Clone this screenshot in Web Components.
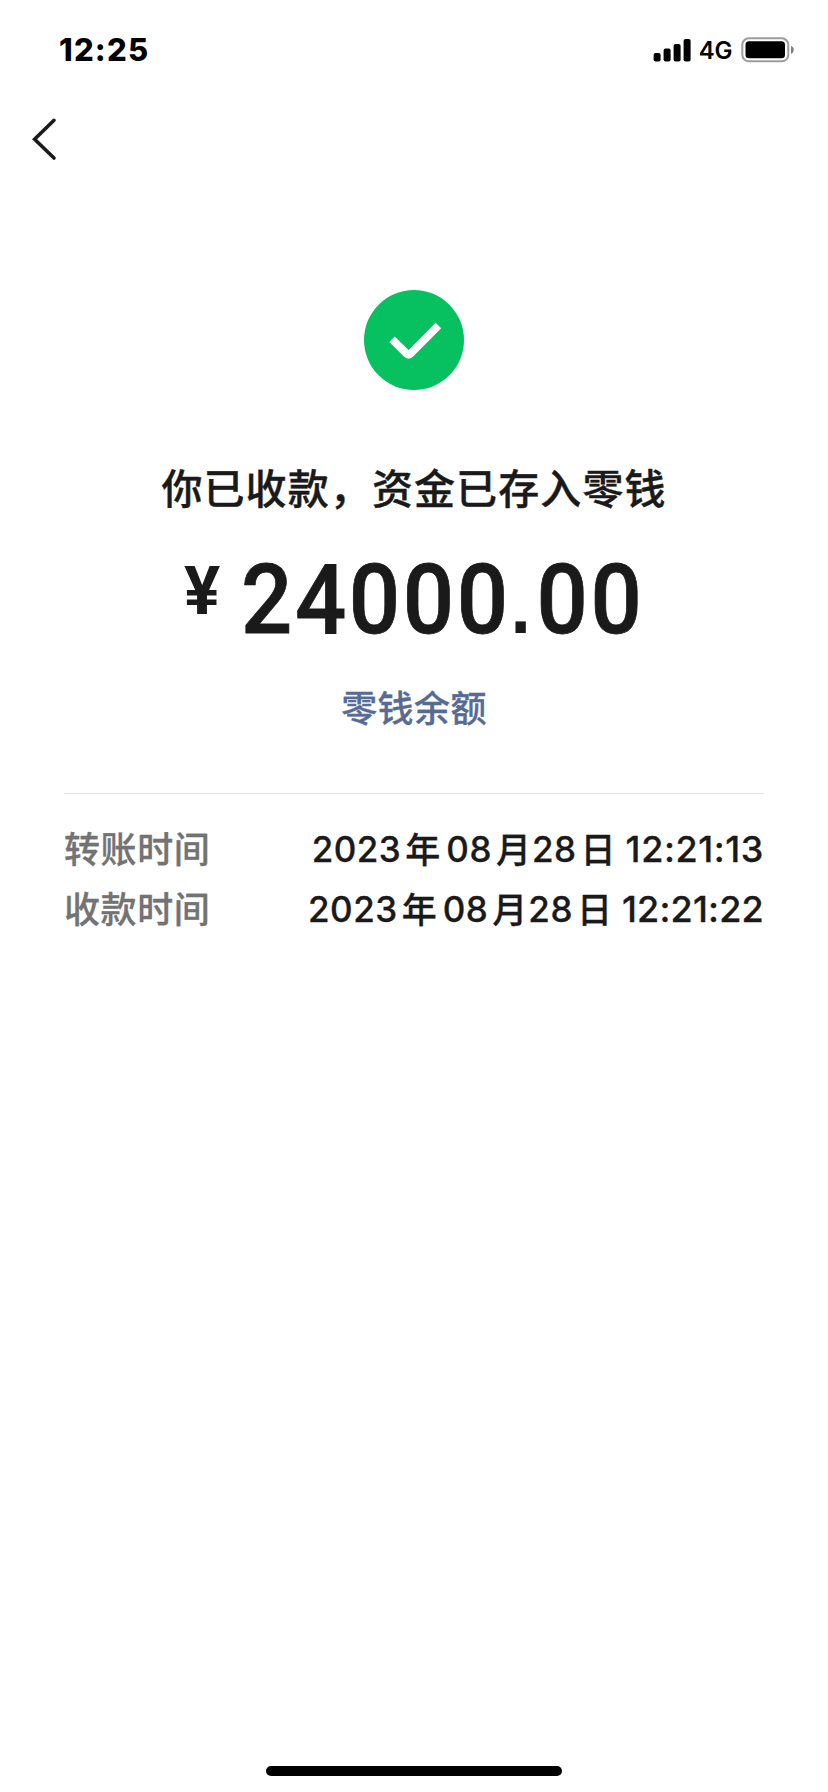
<!DOCTYPE html>
<html lang="zh-CN">
<head>
<meta charset="utf-8">
<title>收款</title>
<style>
html,body{margin:0;background:#fff}
body{font-family:Inter,"Noto Sans CJK SC",sans-serif;color:#1a1a1a}
</style>
</head>
<body>
<receipt-page></receipt-page>
<script>
const define=(name,html)=>customElements.define(name,class extends HTMLElement{
  constructor(){super();const t=document.createElement('template');t.innerHTML=html;
    this.attachShadow({mode:'open'}).append(t.content.cloneNode(true));}
});

define('status-bar',`<style>
:host{display:flex;justify-content:space-between;align-items:center;height:100px;box-sizing:border-box;padding:0 33px 0 59px;color:#000}
.time{font-size:31px;font-weight:800;line-height:40px;letter-spacing:1.2px}
.right{display:flex;align-items:center}
.net{font-size:24px;font-weight:600;line-height:30px;margin:1px 9px 0 8px;letter-spacing:-.4px}
svg{display:block}
</style>
<span class="time"><slot></slot></span>
<div class="right">
<svg width="38" height="24" viewBox="0 0 38 24"><rect x="0.6" y="15" width="7" height="8.6" rx="2"/><rect x="10.6" y="10.6" width="7" height="13" rx="2"/><rect x="20.6" y="6" width="7" height="17.6" rx="2"/><rect x="30.6" y="1" width="7" height="22.6" rx="2"/></svg>
<span class="net"><slot name="network"></slot></span>
<svg width="54" height="26" viewBox="0 0 54 26"><rect x="1.3" y="1.3" width="46" height="23" rx="6.5" fill="none" stroke="#9c9c9c" stroke-width="2"/><rect x="4.5" y="4.3" width="39.5" height="17" rx="3.5"/><path d="M50 8.8C53.7 10.2 53.7 15.6 50 17Z" fill="#808080"/></svg>
</div>`);

define('nav-bar',`<style>
:host{display:flex;align-items:center;height:78px;padding-left:30px}
svg{display:block}
</style>
<svg width="30" height="46" viewBox="0 0 30 46" fill="none" stroke="#1a1a1a" stroke-width="3.6" stroke-linecap="round" stroke-linejoin="miter"><path d="M24 4.3L4.6 23.3L24 42"/></svg>`);

define('success-mark',`<style>:host{display:block;width:100px;height:100px}svg{display:block}</style>
<svg width="100" height="100" viewBox="0 0 100 100"><circle cx="50" cy="50" r="50" fill="#07c160"/><path d="M28 49.3L42.3 63.4Q44.5 65.6 46.7 63.4L74.4 35.5" fill="none" stroke="#fff" stroke-width="7.8"/></svg>`);

define('money-amount',`<style>
:host{display:flex;font-family:Roboto,sans-serif;font-weight:500;height:96px;color:#1a1a1a}
.sign{font-size:67px;font-weight:700;line-height:96px;transform:translateY(-9px) scaleX(1.01);transform-origin:0 0;width:57px}
.num{width:400px;font-size:96px;line-height:96px;white-space:nowrap;letter-spacing:2.8px;transform:scaleX(.94);transform-origin:0 0;-webkit-text-stroke:.8px #1a1a1a}
::slotted(.dot){font-family:"Liberation Sans",sans-serif;font-weight:700;font-size:78px;line-height:1;letter-spacing:6px;-webkit-text-stroke:0}
</style><span class="sign"><slot name="sign"></slot></span><span class="num"><slot></slot></span>`);

define('detail-row',`<style>
:host{display:flex;justify-content:space-between;height:60px;line-height:60px;font-size:36px;font-weight:500;white-space:nowrap}
.label{color:#737373;letter-spacing:.6px;-webkit-text-stroke:.3px #737373;transform:translateY(1px)}
.value{display:flex}
</style><span class="label"><slot name="label"></slot></span><span class="value"><slot></slot></span>`);

define('date-time',`<style>
:host{display:flex;font-weight:500;color:#1a1a1a;-webkit-text-stroke:.3px #1a1a1a}
.c{font-size:35px;font-family:"Noto Sans CJK SC",sans-serif;transform:translateY(-1.5px);-webkit-text-stroke:.3px #1a1a1a}
.y,.m,.d{font-size:35px;letter-spacing:.5px}
.c1{margin:0 6px 0 4px}.c2{margin:0 1px 0 4px}.c3{margin:0 10px 0 4px}
.t{letter-spacing:var(--time-spacing,0)}
</style><span class="y"><slot name="y"></slot></span><span class="c c1">年</span><span class="m"><slot name="m"></slot></span><span class="c c2">月</span><span class="d"><slot name="d"></slot></span><span class="c c3">日</span><span class="t"><slot></slot></span>`);

define('home-indicator',`<style>:host{display:block;width:296px;height:10px;border-radius:5px;background:#000}</style>`);

define('receipt-page',`<style>
:host{display:flex;flex-direction:column;width:828px;height:1792px;background:#fff}
main{flex:1;display:flex;flex-direction:column;align-items:center;padding:112px 64px 0}
h1{margin:66px 0 0;font:500 41px/60px "Noto Sans CJK SC",sans-serif;letter-spacing:1.1px;white-space:nowrap;-webkit-text-stroke:.4px #1a1a1a}
money-amount{margin-top:36px;align-self:flex-start;margin-left:120px}
a{margin-top:31px;font:500 36px/54px "Noto Sans CJK SC",sans-serif;letter-spacing:.4px;color:#576b95;-webkit-text-stroke:.3px #576b95}
section{align-self:stretch;margin-top:60px;border-top:1px solid #e3e3e3;padding-top:25px}
home-indicator{align-self:center;margin-bottom:16px}
</style>
<status-bar>12:25<span slot="network">4G</span></status-bar>
<nav-bar></nav-bar>
<main>
<success-mark></success-mark>
<h1>你已收款，资金已存入零钱</h1>
<money-amount><span slot="sign">¥</span>24000<span class="dot">.</span>00</money-amount>
<a>零钱余额</a>
<section>
<detail-row><span slot="label">转账时间</span><date-time style="--time-spacing:.6px"><span slot="y">2023</span><span slot="m">08</span><span slot="d">28</span>12:21:13</date-time></detail-row>
<detail-row><span slot="label">收款时间</span><date-time style="--time-spacing:.2px"><span slot="y">2023</span><span slot="m">08</span><span slot="d">28</span>12:21:22</date-time></detail-row>
</section>
</main>
<home-indicator></home-indicator>`);
</script>
</body>
</html>
